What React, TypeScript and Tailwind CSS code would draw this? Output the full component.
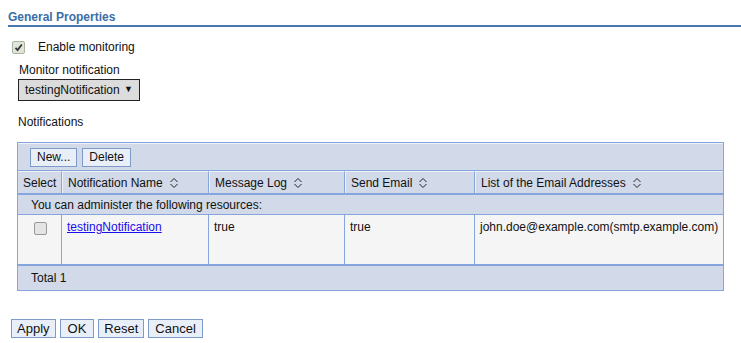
import { useState } from "react";

const SortIcon = () => (
  <svg width="10" height="12" viewBox="0 0 10 12" className="ml-[6px] inline-block">
    <path d="M1.5 5 L5 1.5 L8.5 5" fill="none" stroke="#222" strokeWidth="1" />
    <path d="M1.5 7 L5 10.5 L8.5 7" fill="none" stroke="#222" strokeWidth="1" />
  </svg>
);

const cols = "grid-cols-[44px_147px_136px_130px_1fr]";

function Btn({ label, className = "" }: { label: string; className?: string }) {
  return (
    <button
      className={`h-[19px] border border-[#7d9ac8] bg-[#e9eff9] text-[#111] leading-none ${className}`}
    >
      {label}
    </button>
  );
}

export default function App() {
  const [enabled, setEnabled] = useState(true);
  const [selected, setSelected] = useState(false);

  return (
    <div className="w-[741px] h-[343px] bg-white text-[12px] text-[#111] font-['Liberation_Sans',Arial,sans-serif] overflow-hidden">
      <div className="pl-[8px] pt-[11px]">
        <div className="h-[13px] leading-[13px] font-bold text-[#3b6ea8]">General Properties</div>
        <div className="mt-[1px] h-[2px] bg-[#4a77ad]" />
      </div>

      <div className="flex items-center pl-[12px] mt-[13px] h-[14px]">
        <button
          onClick={() => setEnabled(!enabled)}
          className="w-[13px] h-[13px] rounded-[2px] border border-[#a7b5a0] bg-[#dfe5da] flex items-center justify-center"
        >
          {enabled && (
            <svg width="9" height="9" viewBox="0 0 9 9">
              <path d="M1.5 4.8 L3.6 7 L7.8 1.5" fill="none" stroke="#333" strokeWidth="1.8" />
            </svg>
          )}
        </button>
        <span className="ml-[13px]">Enable monitoring</span>
      </div>

      <div className="pl-[19px] mt-[10px] h-[13px] leading-[13px]">Monitor notification</div>
      <div className="pl-[18px] mt-[2px]">
        <div className="w-[122px] h-[22px] border border-[#222] bg-[#dcdcdc] flex items-center pl-[6px] pr-[6px] justify-between">
          <span>testingNotification</span>
          <span className="text-[9px]">▼</span>
        </div>
      </div>

      <div className="pl-[18px] mt-[15px] h-[13px] leading-[13px]">Notifications</div>

      <div className="ml-[17px] mt-[13px] w-[707px] border border-[#86a5dc] bg-[#d2d9e8]">
        <div className="h-[28px] flex items-center gap-[5px] pl-[12px] border-b border-[#86a5dc] border-t border-t-[#eef2f8]">
          <Btn label="New..." className="text-[12px] px-[6px]" />
          <Btn label="Delete" className="text-[12px] px-[6px]" />
        </div>
        <div className={`grid ${cols} h-[24px] border-b-2 border-[#86a5dc]`}>
          {[
            ["Select", false],
            ["Notification Name", true],
            ["Message Log", true],
            ["Send Email", true],
            ["List of the Email Addresses", true],
          ].map(([t, s], i) => (
            <div
              key={i}
              className={`flex items-center pl-[5px] border-t border-t-[#eef2f8] ${i > 0 ? "border-l border-l-[#eef2f8]" : ""} ${i < 4 ? "border-r border-r-[#86a5dc]" : ""}`}
            >
              {t as string}
              {s && <SortIcon />}
            </div>
          ))}
        </div>
        <div className="h-[20px] flex items-center pl-[13px] border-b border-[#86a5dc]">
          You can administer the following resources:
        </div>
        <div className={`grid ${cols} h-[51px] bg-[#f5f5f5] border-b-2 border-[#86a5dc]`}>
          <div className="flex justify-center pt-[7px] border-r border-[#86a5dc]">
            <button
              onClick={() => setSelected(!selected)}
              className="w-[13px] h-[13px] rounded-[2px] border border-[#999] bg-[#e4e4e4] ml-[2px]"
            />
          </div>
          <div className="pl-[5px] pt-[3px] border-r border-[#86a5dc]">
            <a href="#" className="text-[#1a0dee] underline">testingNotification</a>
          </div>
          <div className="pl-[5px] pt-[3px] border-r border-[#86a5dc]">true</div>
          <div className="pl-[5px] pt-[3px] border-r border-[#86a5dc]">true</div>
          <div className="pl-[5px] pt-[3px]">john.doe@example.com(smtp.example.com)</div>
        </div>
        <div className="h-[24px] flex items-center pl-[13px]">Total 1</div>
      </div>

      <div className="flex gap-[4px] pl-[11px] mt-[28px]">
        <Btn label="Apply" className="text-[13px] px-[5px]" />
        <Btn label="OK" className="text-[13px] px-[7px]" />
        <Btn label="Reset" className="text-[13px] px-[5px]" />
        <Btn label="Cancel" className="text-[13px] px-[6px]" />
      </div>
    </div>
  );
}
